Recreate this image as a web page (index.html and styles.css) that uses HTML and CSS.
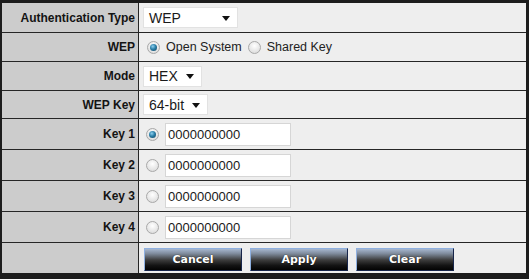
FILE: index.html
```html
<!DOCTYPE html>
<html>
<head>
<meta charset="utf-8">
<link rel="stylesheet" href="styles.css">
</head>
<body>
<div class="frame">
  <div class="grid">
    <div class="lbl r1">Authentication Type</div>
    <div class="val r1"><div class="sel w95"><span>WEP</span><svg class="arr" width="8" height="5" viewBox="0 0 8 5"><path d="M0 0H8L4 5Z" fill="#111"/></svg></div></div>

    <div class="lbl r2">WEP</div>
    <div class="val r2">
      <span class="radio on"></span><span class="rtxt">Open System</span>
      <span class="radio sk"></span><span class="rtxt">Shared Key</span>
    </div>

    <div class="lbl r3">Mode</div>
    <div class="val r3"><div class="sel w58"><span>HEX</span><svg class="arr" width="8" height="5" viewBox="0 0 8 5"><path d="M0 0H8L4 5Z" fill="#111"/></svg></div></div>

    <div class="lbl r4">WEP Key</div>
    <div class="val r4"><div class="sel w64"><span>64-bit</span><svg class="arr" width="8" height="5" viewBox="0 0 8 5"><path d="M0 0H8L4 5Z" fill="#111"/></svg></div></div>

    <div class="lbl rk">Key 1</div>
    <div class="val rk"><span class="radio on kr"></span><div class="inp">0000000000</div></div>

    <div class="lbl rk">Key 2</div>
    <div class="val rk"><span class="radio kr"></span><div class="inp">0000000000</div></div>

    <div class="lbl rk">Key 3</div>
    <div class="val rk"><span class="radio kr"></span><div class="inp">0000000000</div></div>

    <div class="lbl rk">Key 4</div>
    <div class="val rk"><span class="radio kr"></span><div class="inp">0000000000</div></div>

    <div class="lbl rk"></div>
    <div class="val rk btns">
      <button class="btn">Cancel</button>
      <button class="btn">Apply</button>
      <button class="btn">Clear</button>
    </div>
  </div>
</div>
</body>
</html>
```

FILE: styles.css
```css
html, body {
  margin: 0;
  padding: 0;
  background: #1c1c1c;
}
.frame {
  width: 529px;
  height: 279px;
  box-sizing: border-box;
  padding: 3px 3px 6px 2px;
  background: #1c1c1c;
}
.grid {
  display: grid;
  grid-template-columns: 136px 1fr;
  grid-template-rows: 29px 28px 28px 27px 30px 30px 30px 30px 30px;
  gap: 1px;
  background: #262626;
}
.lbl {
  background: #cccccc;
  color: #141414;
  font-family: "Liberation Sans", Arial, sans-serif;
  font-weight: bold;
  font-size: 12px;
  display: flex;
  align-items: center;
  justify-content: flex-end;
  padding-right: 3px;
}
.val {
  background: #eeeeee;
  display: flex;
  align-items: center;
  padding-left: 4px;
  font-family: "Liberation Sans", Arial, sans-serif;
  font-size: 13px;
  color: #1a1a1a;
}
.sel {
  height: 21px;
  background: #fff;
  border: 1px solid #e2e2e2;
  box-sizing: border-box;
  display: flex;
  align-items: center;
  justify-content: space-between;
  padding: 0 7px 0 5px;
  font-size: 14px;
}
.w95 { width: 95px; }
.w58 { width: 59px; }
.w64 { width: 65px; }
.arr { margin-top: 1px; }
.radio {
  width: 13px;
  height: 13px;
  box-sizing: border-box;
  border-radius: 50%;
  border: 1px solid #a8a8a8;
  background: radial-gradient(circle at 50% 35%, #ffffff 0%, #e6e6e6 60%, #d4d4d4 100%);
  margin-left: 4px;
  display: inline-block;
  position: relative;
}
.radio.on::after {
  content: "";
  position: absolute;
  left: 2px;
  top: 2px;
  width: 7px;
  height: 7px;
  border-radius: 50%;
  background: radial-gradient(circle at 40% 35%, #8fd0ef 0%, #2a7fa8 45%, #0f3d58 100%);
}
.rtxt {
  margin-left: 6px;
  font-size: 12.5px;
  color: #222;
}
.sk { margin-left: 6px; }
.kr { margin-left: 3px; }
.inp {
  margin-left: 6px;
  width: 126px;
  height: 23px;
  box-sizing: border-box;
  background: #fff;
  border: 1px solid #d6d6d6;
  padding-left: 2px;
  display: flex;
  align-items: center;
  font-size: 13px;
  color: #1a1a1a;
}
.btns {
  padding-left: 5px;
  gap: 8px;
}
.btn {
  width: 98px;
  height: 23px;
  margin: 0;
  padding: 0;
  border: 1px solid;
  border-color: #8fb0e0 #17254a #17254a #8fb0e0;
  background: linear-gradient(#a6b7cf 0%, #7f8b9c 22%, #3d3d3d 52%, #141414 78%, #030303 100%);
  color: #ffffff;
  font-family: "DejaVu Sans", Verdana, sans-serif;
  font-weight: bold;
  font-size: 11px;
  text-shadow: 0 0 1px #000;
  margin-top: 2px;
}
```
